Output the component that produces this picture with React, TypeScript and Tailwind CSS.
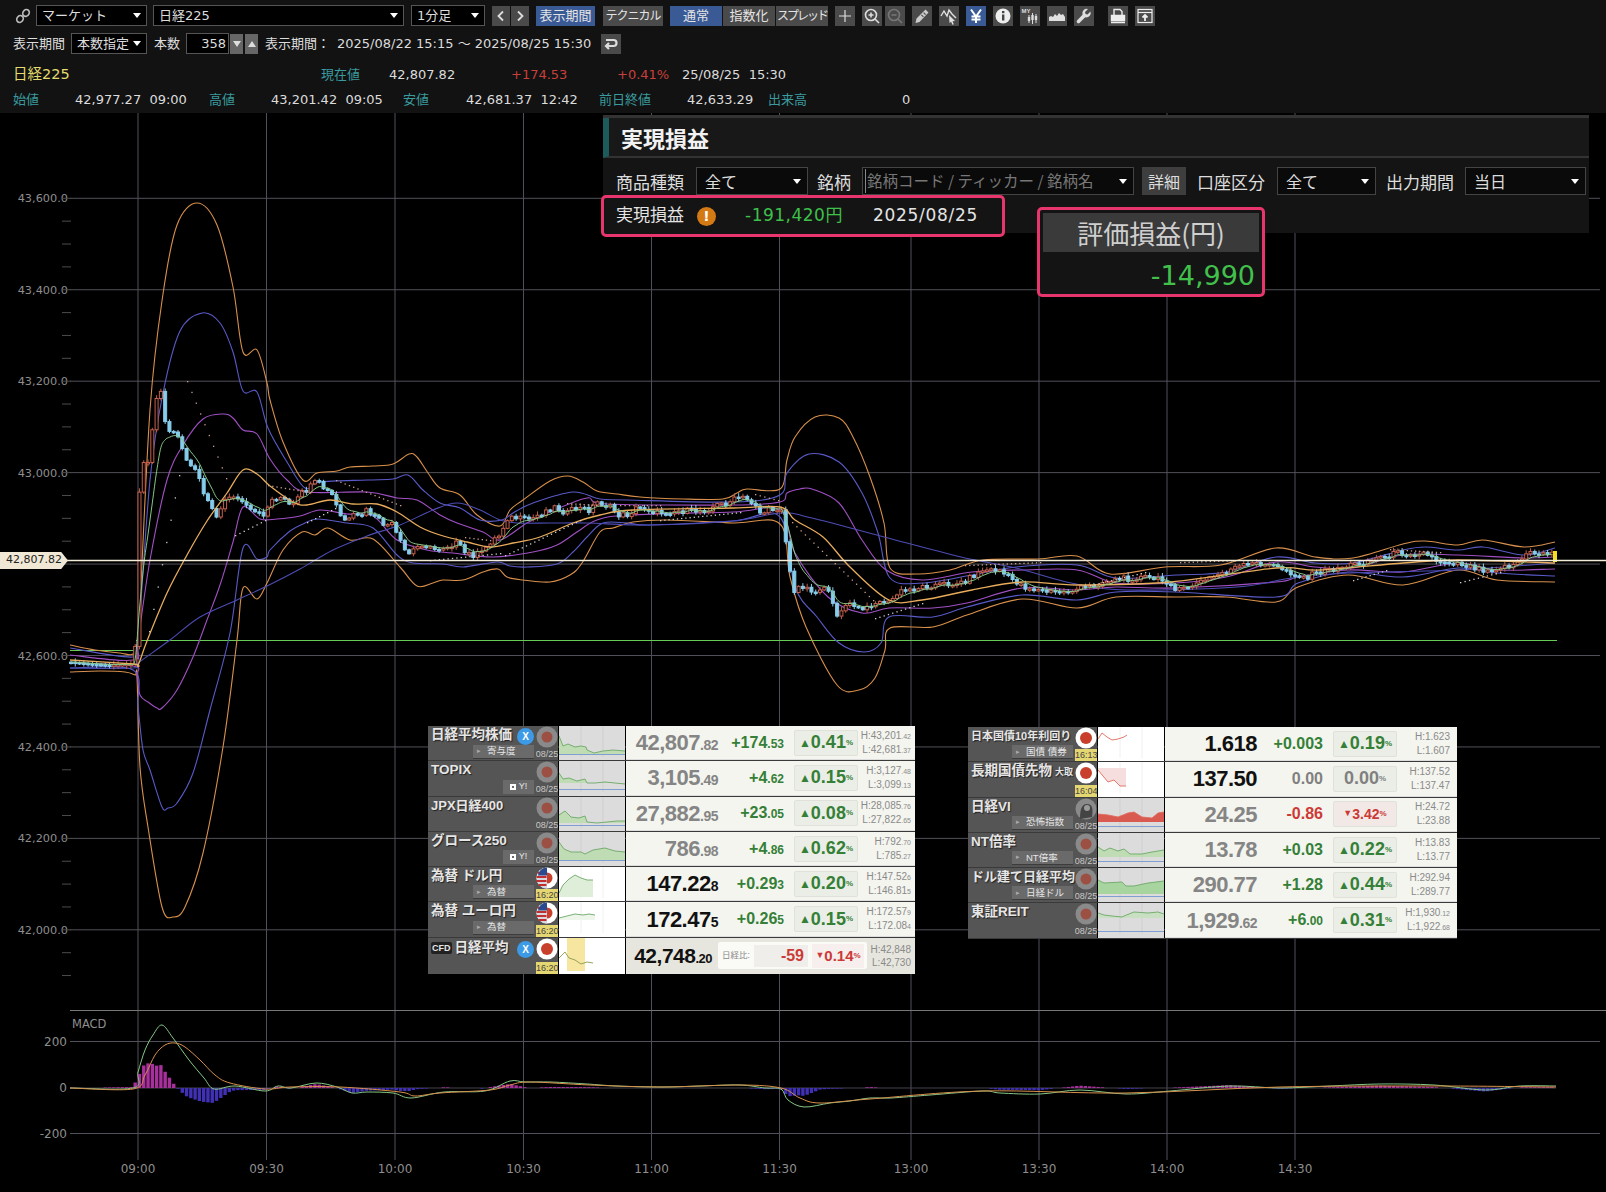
import React from "react";

type Pt = [number, number];

const XS = [138, 266.5, 395, 523.5, 651.5, 779.5, 911, 1039, 1167, 1295];
const TIMES = ["09:00", "09:30", "10:00", "10:30", "11:00", "11:30", "13:00", "13:30", "14:00", "14:30"];

const ORANGE_U: Pt[] = [[70,645],[95,650],[120,653],[133,654],[138,640],[150,410],[163,294],[177,225],[197,203],[217,225],[233,287],[243,352],[257,350],[267,383],[270,400],[283,442],[303,480],[317,473],[337,471],[350,467],[373,466],[393,464],[409,454],[417,457],[428,473],[440,488],[460,495],[477,515],[500,526],[510,510],[523,500],[550,481],[568,476],[583,482],[597,491],[617,494],[640,497],[683,499],[723,499],[737,493],[747,489],[780,489],[787,460],[795,437],[815,417],[839,418],[853,437],[870,477],[884,523],[890,568],[917,574],[950,570],[983,560],[1038,559],[1077,556],[1110,574],[1165,567],[1221,565],[1276,548],[1315,557],[1353,558],[1403,544],[1425,541],[1458,545],[1483,540],[1524,547],[1555,542]];
const ORANGE_L: Pt[] = [[70,672],[100,671],[125,672],[135,675],[137,677],[140,767],[148,827],[162,907],[173,917],[185,907],[203,853],[223,747],[237,640],[243,588],[257,599],[267,583],[283,550],[302,532],[315,535],[328,528],[350,540],[373,539],[400,567],[417,586],[433,583],[443,580],[463,580],[483,572],[498,569],[507,577],[523,580],[550,582],[570,575],[582,563],[600,532],[613,528],[633,522],[667,520],[733,523],[780,524],[790,577],[806,627],[837,685],[859,690],[875,678],[885,650],[890,628],[933,627],[967,615],[1022,599],[1077,608],[1116,597],[1176,597],[1226,597],[1276,602],[1298,587],[1348,575],[1403,585],[1458,570],[1497,580],[1555,582]];
const BLUE_U: Pt[] = [[70,648],[133,657],[138,640],[150,480],[163,393],[180,331],[202,313],[220,323],[233,352],[243,391],[257,392],[268,428],[287,462],[305,488],[320,482],[367,480],[393,479],[408,475],[423,490],[440,503],[460,508],[480,520],[502,520],[513,513],[533,503],[573,492],[600,499],[627,500],[733,502],[780,495],[787,473],[809,454],[839,462],[862,493],[878,533],[890,578],[922,583],[972,575],[1016,567],[1077,565],[1116,578],[1176,575],[1226,572],[1276,557],[1315,563],[1353,563],[1403,550],[1425,547],[1458,550],[1483,547],[1524,555],[1555,548]];
const BLUE_L: Pt[] = [[70,668],[133,670],[138,707],[143,750],[150,770],[162,807],[168,808],[177,803],[193,773],[210,710],[230,633],[243,548],[257,559],[267,557],[270,550],[290,531],[303,524],[317,519],[347,523],[373,528],[397,555],[413,563],[443,564],[463,567],[497,562],[510,566],[527,567],[557,564],[573,552],[587,537],[603,523],[627,523],[650,525],[733,521],[780,517],[795,587],[817,617],[839,643],[864,652],[881,643],[889,617],[933,617],[967,607],[1022,595],[1077,600],[1116,592],[1176,592],[1276,597],[1298,583],[1348,572],[1403,577],[1458,568],[1497,573],[1555,576]];
const PURPLE_U: Pt[] = [[70,655],[133,660],[138,640],[150,560],[167,480],[183,445],[203,419],[223,414],[233,418],[243,430],[257,434],[270,459],[287,480],[307,492],[367,492],[397,498],[417,500],[440,515],[457,523],[483,532],[500,540],[527,523],[550,512],[587,498],[607,504],[733,505],[780,502],[787,493],[800,489],[812,489],[839,503],[862,540],[886,570],[922,580],[972,572],[1022,570],[1077,570],[1116,583],[1176,583],[1226,577],[1276,562],[1315,567],[1353,568],[1403,555],[1458,555],[1524,558],[1555,557]];
const PURPLE_L: Pt[] = [[70,663],[133,666],[137,675],[140,695],[148,702],[157,708],[162,708],[177,690],[193,657],[207,620],[220,585],[233,542],[243,507],[260,519],[277,519],[300,516],[320,510],[347,514],[373,516],[397,540],[427,550],[453,553],[493,557],[533,552],[557,545],[577,532],[597,520],[630,515],[733,512],[780,510],[795,553],[828,597],[862,613],[889,608],[933,608],[967,603],[1022,588],[1077,590],[1116,587],[1176,588],[1276,582],[1298,577],[1348,570],[1403,572],[1458,563],[1497,570],[1555,569]];
const MA_MID: Pt[] = [[70,660],[133,664],[138,665],[147,641],[167,593],[187,555],[207,521],[227,493],[243,470],[257,474],[270,486],[293,502],[307,505],[330,500],[353,504],[377,504],[397,512],[420,527],[440,535],[467,542],[490,547],[513,543],[540,537],[573,523],[600,515],[633,510],[733,508],[780,507],[795,520],[823,537],[850,567],[889,600],[922,600],[972,590],[1022,582],[1077,585],[1171,582],[1276,568],[1320,570],[1403,563],[1458,560],[1555,563]];
const MA_LONG: Pt[] = [[70,668],[133,668],[138,663],[170,640],[200,617],[237,600],[267,586],[300,569],[333,550],[367,536],[400,525],[433,510],[457,503],[480,510],[500,520],[517,523],[550,523],[587,523],[650,525],[733,521],[781,513],[812,518],[884,537],[961,557],[1016,568],[1071,583],[1127,590],[1237,587],[1292,578],[1348,573],[1458,570],[1555,563]];
const CLOSE: Pt[] = [[70,662],[90,664],[110,665],[133,664],[136,640],[140,470],[145,460],[150,464],[154,405],[158,395],[162,390],[166,430],[171,432],[175,432],[180,440],[184,455],[188,463],[192,467],[196,470],[200,480],[204,495],[209,502],[213,510],[218,520],[222,504],[226,498],[230,497],[235,497],[240,500],[244,503],[248,510],[253,513],[258,513],[262,517],[266,510],[272,500],[278,497],[283,498],[288,505],[293,506],[297,500],[302,493],[307,490],[315,483],[320,484],[325,490],[332,495],[338,510],[342,520],[350,520],[355,515],[360,518],[365,510],[370,513],[378,520],[385,525],[392,525],[397,535],[403,548],[408,555],[413,550],[423,543],[432,550],[443,547],[457,543],[465,553],[473,555],[482,553],[490,542],[500,535],[507,518],[517,518],[525,520],[533,518],[547,510],[555,507],[567,513],[577,508],[590,510],[597,502],[610,507],[618,515],[627,515],[637,508],[645,508],[657,513],[673,511],[693,511],[705,510],[717,505],[727,503],[740,497],[747,500],[757,505],[760,513],[777,508],[783,508],[787,557],[790,570],[793,597],[798,587],[806,587],[815,593],[826,585],[831,600],[837,615],[848,603],[862,610],[878,602],[889,602],[900,592],[931,585],[961,583],[983,570],[1000,570],[1005,575],[1027,588],[1049,592],[1066,592],[1094,585],[1110,580],[1143,577],[1171,582],[1176,592],[1210,578],[1237,567],[1259,563],[1281,568],[1303,578],[1320,572],[1359,563],[1397,553],[1425,553],[1436,560],[1458,563],[1486,570],[1513,565],[1530,553],[1552,553]];
const MACD: Pt[] = [[70,1088],[133,1088],[138,1072],[145,1050],[153,1035],[162,1025],[173,1038],[189,1060],[204,1078],[214,1089],[235,1086],[265,1091],[278,1086],[291,1088],[316,1083],[337,1087],[352,1093],[367,1092],[393,1093],[411,1098],[444,1092],[485,1091],[510,1081],[525,1082],[551,1082],[587,1084],[617,1086],[663,1087],[700,1086],[740,1085],[765,1088],[781,1089],[788,1100],[804,1107],[830,1103],[850,1101],[870,1098],[891,1098],[930,1095],[983,1091],[1000,1093],[1040,1094],[1080,1090],[1126,1094],[1170,1091],[1230,1086],[1280,1088],[1330,1086],[1380,1084],[1434,1085],[1485,1090],[1520,1086],[1556,1086]];
const SIGNAL: Pt[] = [[70,1088],[133,1089],[145,1075],[155,1055],[165,1045],[175,1043],[185,1047],[200,1060],[215,1075],[230,1083],[265,1089],[290,1087],[340,1087],[400,1092],[415,1096],[440,1093],[490,1090],[510,1085],[530,1082],[590,1085],[660,1087],[740,1085],[781,1088],[800,1098],[820,1103],[870,1099],[983,1091],[1126,1093],[1280,1087],[1434,1086],[1556,1087]];

// sar segments: x0,y0,x1,y1,colour
const SAR: [number, number, number, number, string][] = [
  [149,631,179,475,"#cfcfcf"],[187,381,226,478,"#c9a090"],[235,535,265,520,"#cfcfcf"],[268,485,310,492,"#c9a090"],
  [307,522,335,508,"#cfcfcf"],[336,480,400,505,"#c9a090"],[430,560,500,553,"#cfcfcf"],[465,537,490,540,"#c9a090"],
  [505,555,580,520,"#cfcfcf"],[567,503,600,505,"#c9a090"],[620,505,660,505,"#c9a090"],[660,520,740,512,"#cfcfcf"],
  [755,494,778,500,"#c9a090"],[792,522,873,600,"#c9a090"],[875,618,922,603,"#cfcfcf"],[965,565,1040,562,"#c9a090"],
  [1090,585,1145,572,"#cfcfcf"],[1180,562,1235,560,"#c9a090"],[1353,580,1386,570,"#cfcfcf"],[1390,549,1440,552,"#c9a090"],
  [1460,582,1500,572,"#cfcfcf"],
];

function interp(pts: Pt[], x: number) {
  for (let i = 1; i < pts.length; i++) {
    if (x <= pts[i][0]) {
      const [x0, y0] = pts[i - 1];
      const [x1, y1] = pts[i];
      return y0 + ((y1 - y0) * (x - x0)) / (x1 - x0);
    }
  }
  return pts[pts.length - 1][1];
}

// catmull-rom through the read-off points so the bands don't look angular
function smooth(pts: Pt[]) {
  let d = `M${pts[0][0]} ${pts[0][1]}`;
  for (let i = 0; i < pts.length - 1; i++) {
    const p0 = pts[Math.max(i - 1, 0)];
    const p1 = pts[i];
    const p2 = pts[i + 1];
    const p3 = pts[Math.min(i + 2, pts.length - 1)];
    const cx1 = p1[0] + (p2[0] - p0[0]) / 6;
    const cy1 = p1[1] + (p2[1] - p0[1]) / 6;
    const cx2 = p2[0] - (p3[0] - p1[0]) / 6;
    const cy2 = p2[1] - (p3[1] - p1[1]) / 6;
    d += ` C${cx1} ${cy1} ${cx2} ${cy2} ${p2[0]} ${p2[1]}`;
  }
  return d;
}

const BARS: number[] = [];
for (let x = 71; x < 1553; x += 4.28) BARS.push(x);

function wobble(i: number) {
  const s = Math.sin(i * 12.9898) * 43758.5453;
  return s - Math.floor(s);
}

const CLOSES = BARS.map((x, i) => {
  const base = interp(CLOSE, x);
  if (x < 240) return base;
  return base + (wobble(i + 7) - 0.5) * (x < 800 || x > 900 ? 6 : 3);
});

const FAST: Pt[] = (() => {
  let e = CLOSES[0];
  return BARS.map((x, i) => {
    e += (CLOSES[i] - e) * 0.3;
    return [x, e] as Pt;
  });
})();

function Candles() {
  return (
    <g>
      {BARS.map((x, i) => {
        const c = CLOSES[i];
        const o = i === 0 ? c : CLOSES[i - 1];
        const up = c < o;
        const top = Math.min(o, c);
        const h = Math.max(Math.abs(o - c), 1.5);
        const wick = 1 + wobble(i) * 3;
        return (
          <g key={i}>
            <line x1={x} x2={x} y1={top - wick} y2={top + h + wick * 0.8} stroke={up ? "#b8604c" : "#8fd0ec"} strokeWidth="1" />
            <rect x={x - 1.5} y={top} width="3" height={h} fill={up ? "#000" : "#86cdec"} stroke={up ? "#c8604c" : "#86cdec"} strokeWidth="1" />
          </g>
        );
      })}
      <rect x="1553" y="551" width="4" height="11" fill="#f0e020" />
    </g>
  );
}

function Chart() {
  const ticks: number[] = [];
  for (let p = 0; p < 35; p++) ticks.push(198.3 + 22.86 * p);
  return (
    <svg viewBox="0 113 1606 1079" className="absolute inset-0 h-[1079px] w-[1606px] [font-family:'DejaVu_Sans',sans-serif]">
      {XS.map((x) => (
        <line key={x} x1={x} x2={x} y1="113" y2="1160" stroke="#50505c" />
      ))}
      {[43600, 43400, 43200, 43000, 42800, 42600, 42400, 42200, 42000].map((p) => {
        const y = 198.3 + (43600 - p) * 0.4572;
        return (
          <g key={p}>
            <line x1="70" x2="1600" y1={y} y2={y} stroke="#50505a" />
            {p !== 42800 && (
              <text x="68" y={y + 4} textAnchor="end" fontSize="11.3" fill="#8e8e8e">
                {p.toLocaleString("en-US")}.0
              </text>
            )}
          </g>
        );
      })}
      {ticks.filter((y) => y < 990).map((y, i) => (
        <line key={i} x1="62" x2="71" y1={y} y2={y} stroke="#4c4c4c" />
      ))}
      <line x1="70" x2="1606" y1="1010.5" y2="1010.5" stroke="#777" />
      <line x1="70" x2="1600" y1="1041.5" y2="1041.5" stroke="#50505a" />
      <line x1="70" x2="1600" y1="1133.5" y2="1133.5" stroke="#50505a" />
      <line x1="70" x2="1556" y1="1088" y2="1088" stroke="#44444c" />

      <line x1="70" x2="135" y1="650.5" y2="650.5" stroke="#66cc55" />
      <line x1="136" x2="1557" y1="640.5" y2="640.5" stroke="#66cc55" />
      <path d={smooth(ORANGE_U)} fill="none" stroke="#d8904c" strokeWidth="1.1" />
      <path d={smooth(ORANGE_L)} fill="none" stroke="#d8904c" strokeWidth="1.1" />
      <path d={smooth(BLUE_U)} fill="none" stroke="#5a5ac8" strokeWidth="1.1" />
      <path d={smooth(BLUE_L)} fill="none" stroke="#5a5ac8" strokeWidth="1.1" />
      <path d={smooth(PURPLE_U)} fill="none" stroke="#a050c4" strokeWidth="1.1" />
      <path d={smooth(PURPLE_L)} fill="none" stroke="#a050c4" strokeWidth="1.1" />
      <path d={smooth(MA_LONG)} fill="none" stroke="#4c4cb4" strokeWidth="1.1" />
      <Candles />
      <path d={smooth(MA_MID)} fill="none" stroke="#e8ac5c" strokeWidth="1.3" />
      <path d={smooth(FAST)} fill="none" stroke="#86c886" strokeWidth="1" />
      {SAR.map(([x0, y0, x1, y1, c], i) => {
        const n = Math.round((x1 - x0) / 4.28);
        return Array.from({ length: n + 1 }, (_, k) => (
          <rect key={i + "-" + k} x={x0 + (x1 - x0) * (k / n)} y={y0 + (y1 - y0) * (k / n)} width="1.3" height="1.3" fill={c} />
        ));
      })}
      <line x1="0" x2="1606" y1="560.5" y2="560.5" stroke="#f2ecd8" strokeWidth="1.4" />

      <text x="72" y="1028" fontSize="11.5" fill="#8e8e8e">MACD</text>
      <text x="67" y="1045.5" textAnchor="end" fontSize="12" fill="#8e8e8e">200</text>
      <text x="67" y="1092" textAnchor="end" fontSize="12" fill="#8e8e8e">0</text>
      <text x="67" y="1137.5" textAnchor="end" fontSize="12" fill="#8e8e8e">-200</text>
      {BARS.map((x, i) => {
        const d = interp(SIGNAL, x) - interp(MACD, x);
        if (Math.abs(d) < 0.5) return null;
        return (
          <rect key={i} x={x - 1.7} y={d > 0 ? 1088 - d : 1088} width="3.4" height={Math.abs(d)} fill={d > 0 ? "#a8309c" : "#4030b4"} />
        );
      })}
      <path d={smooth(MACD)} fill="none" stroke="#86c886" strokeWidth="1" />
      <path d={smooth(SIGNAL)} fill="none" stroke="#d8904c" strokeWidth="1" />
      {XS.map((x, i) => (
        <text key={x} x={x} y="1173" textAnchor="middle" fontSize="12" fill="#8e8e8e">
          {TIMES[i]}
        </text>
      ))}
    </svg>
  );
}

function Caret() {
  return <span className="ml-auto h-0 w-0 border-x-[4px] border-t-[5px] border-x-transparent border-t-white" />;
}

function DarkSelect({ label, className }: { label: string; className: string }) {
  return (
    <div className={"flex h-[21px] items-center border border-[#555] bg-black pl-[5px] pr-[5px] text-[13px] text-[#ddd] " + className}>
      <span>{label}</span>
      <Caret />
    </div>
  );
}

function Btn({ active, children, className = "w-[20px]" }: { active?: boolean; children: React.ReactNode; className?: string }) {
  return (
    <div className={"flex h-[20px] shrink-0 items-center justify-center overflow-hidden whitespace-nowrap text-[13px] text-[#e4e4e4] " + (active ? "bg-[#3a5a96] " : "bg-[#4a4a4a] ") + className}>
      {children}
    </div>
  );
}

const I = { width: 18, height: 18, viewBox: "0 0 18 18", fill: "none" };

function Toolbar() {
  return (
    <div className="ml-[7px] flex items-center gap-[7px]">
      <Btn>
        <svg {...I} stroke="#ddd" strokeWidth="1.2"><path d="M9 3v12M3 9h12" /></svg>
      </Btn>
      <div className="flex gap-[3px]">
        <Btn>
          <svg {...I} stroke="#ddd" strokeWidth="1.6"><circle cx="8" cy="8" r="5.5" /><path d="M12 12l4 4M5.5 8h5M8 5.5v5" /></svg>
        </Btn>
        <Btn>
          <svg {...I} stroke="#777" strokeWidth="1.6"><circle cx="8" cy="8" r="5.5" /><path d="M12 12l4 4M5.5 8h5" /></svg>
        </Btn>
      </div>
      <Btn>
        <svg {...I} fill="#ccc"><path d="M12.5 2.5l3 3-9 9.5-4 1 1-4.5zM11 5.2l2 2-.8.8-2-2zM8.8 7.5l2 2-.8.8-2-2z" fillRule="evenodd" /></svg>
      </Btn>
      <Btn>
        <svg {...I} stroke="#e0e0e0" strokeWidth="1.4"><path d="M1 9l3-5 3 5 2-6 3 4 4 4" /><path d="M9 8l6 6-2.5.2 1.3 3-1.4.5-1.3-3L9.5 16z" fill="#e0e0e0" stroke="none" /></svg>
      </Btn>
      <Btn active>
        <svg {...I} stroke="#fff" strokeWidth="2"><path d="M4 2.5l5 7 5-7M9 9.5v6.5M4.5 9.5h9M4.5 12.5h9" /></svg>
      </Btn>
      <Btn>
        <svg {...I}><circle cx="9" cy="9" r="7.5" fill="#eee" /><rect x="8" y="7.5" width="2.4" height="6" fill="#444" /><rect x="8" y="4" width="2.4" height="2.2" fill="#444" /></svg>
      </Btn>
      <Btn>
        <svg {...I} viewBox="0 0 18 18">
          <text x="0.5" y="6" fontSize="6" fontWeight="700" fill="#ddd" className="[font-family:'Liberation_Sans',sans-serif]">MY</text>
          <path d="M8 8v8M11.5 6v11M15 7v9" stroke="#ddd" /><path d="M6.8 10h2.4v4H6.8zM10.3 8h2.4v5h-2.4zM13.8 9h2.4v4h-2.4z" fill="#ddd" />
        </svg>
      </Btn>
      <Btn>
        <svg {...I} fill="#e0e0e0"><path d="M1 14V10l2-1 2 1 2-3 2 2 2-3 2 2 2-1 2 3v4z" /></svg>
      </Btn>
      <Btn>
        <svg {...I} fill="#ddd"><path d="M15.5 4.5l-3 3-2-.5-.5-2 3-3a4.5 4.5 0 0 0-5.5 5.8L2 13.5a1.8 1.8 0 0 0 2.5 2.500l5.700-5.700a4.500 4.500 0 0 0 5.300-5.800z" /></svg>
      </Btn>
      <div className="ml-[7px]">
        <Btn>
          <svg {...I} stroke="#eee" strokeWidth="1.4"><path d="M5 8V2.500h6l2 2V8" /><path d="M2.500 8.500h13v5h-13zM2 15.500h14" fill="#eee" /></svg>
        </Btn>
      </div>
      <Btn>
        <svg {...I} stroke="#eee" strokeWidth="1.2"><rect x="2" y="2.500" width="14" height="13" /><path d="M2 5.500h14" /><path d="M9 14V8.500M6.500 10.500L9 8l2.500 2.500" strokeWidth="1.800" /></svg>
      </Btn>
    </div>
  );
}

function Header() {
  const lab = "text-[#3a9a9e]";
  return (
    <div className="h-[113px] bg-[#121212] text-[13px] text-[#dcdcdc] [font-family:'DejaVu_Sans','Noto_Sans_CJK_JP',sans-serif]">
      <div className="flex items-center pt-[5px]">
        <div className="ml-[15px] mr-[5px] w-[16px]">
          <svg width="16" height="16" viewBox="0 0 16 16" fill="none" stroke="#bbb" strokeWidth="1.700">
            <ellipse cx="5" cy="11" rx="3" ry="3.600" transform="rotate(40 5 11)" />
            <ellipse cx="11" cy="5" rx="3" ry="3.600" transform="rotate(40 11 5)" />
          </svg>
        </div>
        <DarkSelect label="マーケット" className="w-[111px]" />
        <DarkSelect label="日経225" className="ml-[6px] w-[251px]" />
        <DarkSelect label="1分足" className="ml-[7px] w-[74px]" />
        <div className="ml-[7px] flex gap-[1px]">
          <Btn className="w-[18px]"><svg width="10" height="12" viewBox="0 0 10 12" fill="none" stroke="#ddd" strokeWidth="1.800"><path d="M7 1.500L2.500 6 7 10.500" /></svg></Btn>
          <Btn className="w-[18px]"><svg width="10" height="12" viewBox="0 0 10 12" fill="none" stroke="#ddd" strokeWidth="1.800"><path d="M3 1.500L7.500 6 3 10.500" /></svg></Btn>
        </div>
        <Btn active className="ml-[7px] w-[59px]">表示期間</Btn>
        <Btn className="ml-[8px] w-[60px]"><span className="text-[12px] tracking-[-1px]">テクニカル</span></Btn>
        <div className="ml-[7px] flex gap-[1px]">
          <Btn active className="w-[52px]">通常</Btn>
          <Btn className="w-[52px]">指数化</Btn>
          <Btn className="w-[52px]"><span className="text-[12px] tracking-[-2px]">スプレッド</span></Btn>
        </div>
        <Toolbar />
      </div>
      <div className="mt-[7px] flex items-center text-[13px]">
        <span className="ml-[13px] w-[58px]">表示期間</span>
        <DarkSelect label="本数指定" className="w-[76px]" />
        <span className="ml-[7px] w-[32px]">本数</span>
        <div className="flex h-[21px] w-[43px] items-center justify-end border border-[#555] bg-black pr-[2px] text-[13px]">358</div>
        <div className="ml-[1px] flex h-[20px] w-[13px] items-center justify-center bg-[#666]"><span className="h-0 w-0 border-x-[4px] border-t-[6px] border-x-transparent border-t-[#ddd]" /></div>
        <div className="ml-[2px] flex h-[20px] w-[13px] items-center justify-center bg-[#666]"><span className="h-0 w-0 border-x-[4px] border-b-[6px] border-x-transparent border-b-[#ddd]" /></div>
        <span className="ml-[7px] w-[72px]">表示期間：</span>
        <span className="w-[264px] whitespace-nowrap text-[13px]">2025/08/22 15:15 ～ 2025/08/25 15:30</span>
        <Btn className="w-[20px]">
          <svg width="16" height="14" viewBox="0 0 16 14" fill="none" stroke="#ddd" strokeWidth="2.200"><path d="M3 3h7.500a3 3 0 0 1 0 6H3M6 6L3 9l3 3" /></svg>
        </Btn>
      </div>
      <div className="mt-[12px] flex h-[18px] items-center whitespace-nowrap pl-[13px]">
        <span className="w-[308px] text-[14.500px] text-[#e4dc6c]">日経225</span>
        <span className={"w-[68px] text-[13px] " + lab}>現在値</span>
        <span className="w-[122px]">42,807.82</span>
        <span className="w-[106px] text-[#c8403c]">+174.53</span>
        <span className="w-[65px] text-[#c8403c]">+0.41%</span>
        <span>25/08/25&nbsp;&nbsp;15:30</span>
      </div>
      <div className="mt-[7px] flex h-[18px] items-center whitespace-nowrap pl-[13px]">
        <span className={"w-[62px] text-[13px] " + lab}>始値</span>
        <span className="w-[134px]">42,977.27&nbsp;&nbsp;09:00</span>
        <span className={"w-[62px] text-[13px] " + lab}>高値</span>
        <span className="w-[132px]">43,201.42&nbsp;&nbsp;09:05</span>
        <span className={"w-[63px] text-[13px] " + lab}>安値</span>
        <span className="w-[133px]">42,681.37&nbsp;&nbsp;12:42</span>
        <span className={"w-[88px] text-[13px] " + lab}>前日終値</span>
        <span className="w-[81px]">42,633.29</span>
        <span className={"w-[134px] text-[13px] " + lab}>出来高</span>
        <span>0</span>
      </div>
    </div>
  );
}

function PanelSelect({ label, className }: { label: string; className: string }) {
  return (
    <div className={"flex h-[28px] items-center border border-[#444] bg-[#0a0a0a] pl-[8px] pr-[6px] text-[16px] text-[#ddd] " + className}>
      <span>{label}</span>
      <Caret />
    </div>
  );
}

function ProfitPanel() {
  return (
    <>
      <div className="absolute left-[603px] top-[2px] h-[118px] w-[986px] border-t-[3px] border-[#333] bg-[#141414] [font-family:'Noto_Sans_CJK_JP',sans-serif]">
        <div className="flex h-[40px] items-center border-b-[2px] border-l-[6px] border-b-[#333] border-l-[#1d5a5c] bg-[#181818] pl-[12px] pt-[1px] text-[22px] font-bold text-[#f2f2f2]">実現損益</div>
        <div className="mt-[9px] flex items-center text-[17px] text-[#ddd]">
          <span className="ml-[13px] w-[80px] whitespace-nowrap pt-[2px]">商品種類</span>
          <PanelSelect label="全て" className="w-[112px]" />
          <span className="ml-[9px] w-[45px] pt-[2px]">銘柄</span>
          <div className="flex h-[28px] w-[272px] items-center border border-[#444] bg-[#0a0a0a] pl-[2px] pr-[6px] text-[#777]">
            <span className="border-l border-[#888] pl-[1px] text-[15.500px]">銘柄コード / ティッカー / 銘柄名</span>
            <Caret />
          </div>
          <div className="ml-[8px] flex h-[28px] w-[44px] items-center justify-center bg-[#3e3e3e] text-[16px]">詳細</div>
          <span className="ml-[11px] w-[80px] whitespace-nowrap pt-[2px]">口座区分</span>
          <PanelSelect label="全て" className="w-[99px]" />
          <span className="ml-[10px] w-[79px] whitespace-nowrap pt-[2px]">出力期間</span>
          <PanelSelect label="当日" className="w-[121px]" />
        </div>
      </div>
      <div className="absolute left-[601px] top-[82px] flex h-[42px] w-[404px] items-center rounded-[5px] border-[3px] border-[#e8356d] bg-[#141414] text-[17px] text-[#e4e4e4] [font-family:'DejaVu_Sans','Noto_Sans_CJK_JP',sans-serif]">
        <span className="ml-[12px] w-[81px] whitespace-nowrap">実現損益</span>
        <span className="flex h-[19px] w-[19px] items-center justify-center rounded-full bg-[#d47a14] text-[14px] font-bold leading-none text-white">!</span>
        <span className="ml-[29px] w-[128px] whitespace-nowrap tracking-[0.5px] text-[#3fc04a]">-191,420円</span>
        <span className="whitespace-nowrap tracking-[0.7px]">2025/08/25</span>
      </div>
      <div className="absolute left-[1037px] top-[94px] h-[90px] w-[228px] rounded-[5px] border-[3px] border-[#e8356d] bg-[#141414] p-[3px] [font-family:'DejaVu_Sans','Noto_Sans_CJK_JP',sans-serif]">
        <div className="flex h-[39px] items-center justify-center bg-[#3a3a3a] text-[26px] text-[#cfcfcf] [font-family:'Noto_Sans_CJK_JP',sans-serif]">評価損益(円)</div>
        <div className="mt-[6px] pr-[4px] text-right text-[27px] leading-[36px] text-[#42c04c]">-14,990</div>
      </div>
    </>
  );
}

type RowData = {
  name: string;
  small?: string;
  btn?: string;
  yahoo?: boolean;
  x?: boolean;
  mode: "closed" | "live" | "fx" | "vi";
  time?: string;
  spark: string;
  area?: string;
  base?: number;
  bg: string;
  v: [string, string];
  vLive?: boolean;
  c: [string, string];
  p: string;
  dir: "up" | "down" | "flat";
  h: [string, string];
  l: [string, string];
};

const GRAY = "bg-[#dcdcdc]";
const WHITE = "bg-white";

const ROWS_A: RowData[] = [
  { name: "日経平均株価", btn: "寄与度", x: true, mode: "closed", bg: GRAY, spark: "0,10 4,20 9,18 16,21 22,20 27,21 28,24 35,27 44,25 54,24 66,25", area: "#bfdcb4", base: 28, v: ["42,807", ".82"], c: ["+174", ".53"], p: "0.41", dir: "up", h: ["H:43,201", ".42"], l: ["L:42,681", ".37"] },
  { name: "TOPIX", yahoo: true, mode: "closed", bg: GRAY, spark: "0,12 4,18 10,17 18,20 26,18 28,22 36,22 46,21 56,22 66,23", area: "#bfdcb4", base: 22, v: ["3,105", ".49"], c: ["+4", ".62"], p: "0.15", dir: "up", h: ["H:3,127", ".48"], l: ["L:3,099", ".13"] },
  { name: "JPX日経400", mode: "closed", bg: GRAY, spark: "0,18 6,14 12,20 20,21 26,19 28,25 38,26 48,25 58,24 66,24", area: "#bfdcb4", base: 26, v: ["27,882", ".95"], c: ["+23", ".05"], p: "0.08", dir: "up", h: ["H:28,085", ".76"], l: ["L:27,822", ".65"] },
  { name: "グロース250", yahoo: true, mode: "closed", bg: GRAY, spark: "0,10 5,17 12,20 22,20 26,22 34,18 46,16 56,19 66,20", area: "#bfdcb4", base: 29, v: ["786", ".98"], c: ["+4", ".86"], p: "0.62", dir: "up", h: ["H:792", ".70"], l: ["L:785", ".27"] },
  { name: "為替 ドル円", btn: "為替", mode: "fx", time: "16:20", bg: WHITE, spark: "0,26 4,18 10,12 16,8 22,11 28,13 34,13", area: "#dfeed9", base: 30, v: ["147.22", "8"], vLive: true, c: ["+0.29", "3"], p: "0.20", dir: "up", h: ["H:147.52", "6"], l: ["L:146.81", "5"] },
  { name: "為替 ユーロ円", btn: "為替", mode: "fx", time: "16:20", bg: WHITE, spark: "0,16 8,14 16,12 24,13 30,12 36,13", area: "#eef5ea", base: 18, v: ["172.47", "5"], vLive: true, c: ["+0.26", "5"], p: "0.15", dir: "up", h: ["H:172.57", "9"], l: ["L:172.08", "4"] },
];

const ROWS_B: RowData[] = [
  { name: "日本国債10年利回り", small: "1", btn: "国債 債券", mode: "live", time: "16:13", bg: WHITE, spark: "0,12 4,6 9,10 14,13 20,12 26,10 29,8", v: ["1.618", ""], vLive: true, c: ["+0.003", ""], p: "0.19", dir: "up", h: ["H:1.623", ""], l: ["L:1.607", ""] },
  { name: "長期国債先物", small: "大取", mode: "live", time: "16:04", bg: WHITE, spark: "0,8 5,14 10,20 16,18 22,24 28,24", area: "#f7dede", base: 6, v: ["137.50", ""], vLive: true, c: ["0.00", ""], p: "0.00", dir: "flat", h: ["H:137.52", ""], l: ["L:137.47", ""] },
  { name: "日経VI", btn: "恐怖指数", mode: "vi", bg: GRAY, spark: "0,16 10,17 20,19 30,15 36,14 44,19 54,20 60,15 66,14", area: "#d85a50", base: 24, v: ["24.25", ""], c: ["-0.86", ""], p: "3.42", dir: "down", h: ["H:24.72", ""], l: ["L:23.88", ""] },
  { name: "NT倍率", btn: "NT倍率", mode: "closed", bg: GRAY, spark: "0,14 6,18 12,15 20,18 26,16 32,21 44,21 54,19 66,17", area: "#bfdcb4", base: 24, v: ["13.78", ""], c: ["+0.03", ""], p: "0.22", dir: "up", h: ["H:13.83", ""], l: ["L:13.77", ""] },
  { name: "ドル建て日経平均", btn: "日経ドル", mode: "closed", bg: GRAY, spark: "0,12 6,15 24,14 28,18 36,18 50,15 66,13", area: "#a8d4a0", base: 26, v: ["290.77", ""], c: ["+1.28", ""], p: "0.44", dir: "up", h: ["H:292.94", ""], l: ["L:289.77", ""] },
  { name: "東証REIT", mode: "closed", bg: GRAY, spark: "0,10 6,12 14,13 24,14 26,13 36,9 50,10 60,9 66,11", area: "#c9dfc2", base: 15, v: ["1,929", ".62"], c: ["+6", ".00"], p: "0.31", dir: "up", h: ["H:1,930", ".12"], l: ["L:1,922", ".68"] },
];

function StatusIcon({ mode, time }: { mode: RowData["mode"]; time?: string }) {
  return (
    <div className="flex h-full w-[22px] shrink-0 flex-col items-center justify-between overflow-hidden bg-[#555]">
      <svg width="22" height="22" viewBox="0 0 22 22" className="shrink-0">
        {mode === "closed" && (<><circle cx="11" cy="11" r="10.500" fill="#8a8a8a" /><circle cx="11" cy="11" r="5.500" fill="#9c5044" /></>)}
        {mode === "live" && (<><circle cx="11" cy="11" r="10.500" fill="#fff" /><circle cx="11" cy="11" r="6" fill="#c8402c" /></>)}
        {mode === "fx" && (
          <>
            <circle cx="11" cy="11" r="10.500" fill="#fff" />
            <circle cx="11" cy="11" r="5.500" fill="#c8402c" />
            <path d="M11 .5a10.500 10.500 0 0 0 0 21z" fill="#d8d8e0" />
            <path d="M10.500 6h-9M10.500 10h-10M10.500 14h-10M10.500 18h-8" stroke="#c03030" strokeWidth="2" />
            <path d="M11 .5a9 9 0 0 0-9 8h9z" fill="#2c4a90" />
          </>
        )}
        {mode === "vi" && (
          <>
            <circle cx="11" cy="11" r="10.500" fill="#8a8a8a" />
            <path d="M5 21c0-8 1-15 7-15s6 6 5 13z" fill="#444" />
            <circle cx="12" cy="10" r="3" fill="#9a9a9a" />
          </>
        )}
      </svg>
      {time ? (
        <span className="h-[12px] w-full whitespace-nowrap bg-[#e4d670] text-center text-[9px] leading-[12px] text-[#444]">{time}</span>
      ) : (
        <span className="whitespace-nowrap text-[9px] leading-[13px] text-[#c8c8c8]">08/25</span>
      )}
    </div>
  );
}

function Spark({ r }: { r: RowData }) {
  return (
    <div className={"ml-[1px] h-full w-[66px] shrink-0 " + r.bg}>
      <svg width="66" height="34" viewBox="0 0 66 34">
        {[22, 44].map((x) => (
          <line key={x} x1={x} x2={x} y1="0" y2="31" stroke={r.bg === WHITE ? "#f0f0f0" : "#cfcfcf"} />
        ))}
        {r.area && r.base !== undefined && (
          <polygon
            points={`${r.spark.split(" ")[0].split(",")[0]},${r.base} ${r.spark} ${r.spark.split(" ").slice(-1)[0].split(",")[0]},${r.base}`}
            fill={r.area}
          />
        )}
        {r.bg === GRAY && <line x1="0" x2="66" y1="28.500" y2="28.500" stroke="#7f9fd0" />}
        <polyline points={r.spark} fill="none" stroke={r.dir === "down" || r.name === "日本国債10年利回り" || r.name === "長期国債先物" ? "#e06a5c" : "#6ca868"} strokeWidth="0.900" />
      </svg>
    </div>
  );
}

function NameCell({ r, wide }: { r: RowData; wide?: boolean }) {
  return (
    <div className={"flex h-full shrink-0 flex-col bg-[#555] pl-[3px] pr-[1px] " + (wide ? "w-[107px]" : "w-[108px]")}>
      <div className="flex items-start justify-between">
        <span
          className={
            "whitespace-nowrap font-bold leading-[18px] text-[#e6e6e6] [text-shadow:1px_1px_1px_#222] " +
            (r.small === "1" ? "text-[11px]" : r.name.length > 7 ? "text-[13px]" : "text-[13.500px]")
          }
        >
          {r.name}
          {r.small && r.small !== "1" && <span className="ml-[3px] text-[9px]">{r.small}</span>}
        </span>
        {r.x && (
          <span className="mr-[1px] mt-[2px] flex h-[17px] w-[17px] shrink-0 items-center justify-center rounded-full bg-[#3c9ae6] text-[10px] font-bold text-white">X</span>
        )}
      </div>
      {r.btn && (
        <div className="mb-[2px] mr-[1px] mt-auto flex h-[14px] w-[61px] items-center self-end border-b border-[#3c3c3c] bg-[#6a6a6a] pl-[4px] text-[9.500px] text-[#e6e6e6]">
          <span className="mr-[6px] text-[7px] text-[#aaa]">▸</span>
          <span className="whitespace-nowrap">{r.btn}</span>
        </div>
      )}
      {r.yahoo && (
        <div className="mb-[2px] mr-[1px] mt-auto flex h-[14px] w-[31px] items-center justify-center gap-[3px] self-end bg-[#6a6a6a] text-[9px] text-[#e6e6e6]">
          <span className="h-[6px] w-[6px] border-2 border-white" />
          Y!
        </div>
      )}
    </div>
  );
}

function PctBox({ r }: { r: RowData }) {
  const c = r.dir === "up" ? "text-[#357f37]" : r.dir === "down" ? "text-[#cc3a36]" : "text-[#808080]";
  const bg = r.dir === "down" ? "bg-[#f2e8e6]" : "bg-[#ebeee6]";
  return (
    <div className={"ml-[10px] flex h-[26px] w-[64px] items-center justify-center rounded-[2px] border border-[#e0e2da] font-bold " + bg + " " + c}>
      {r.dir === "up" && <span className="text-[12px]">▲</span>}
      {r.dir === "down" && <span className="text-[9px]">▼</span>}
      <span className={r.dir === "down" ? "text-[14px]" : "text-[18px]"}>{r.p}</span>
      <span className="text-[8px]">%</span>
    </div>
  );
}

function Row({ r, wide }: { r: RowData; wide?: boolean }) {
  const changeColor = r.dir === "up" ? "text-[#357f37]" : r.dir === "down" ? "text-[#cc3a36]" : "text-[#808080]";
  return (
    <div className="flex h-[35.300px] border-b border-[#3a3a3a]">
      <NameCell r={r} wide={wide} />
      <StatusIcon mode={r.mode} time={r.time} />
      <Spark r={r} />
      <div className={"ml-[1px] flex h-full flex-1 items-center border-b border-[#ddd] bg-[#f4f5ef] " + (wide ? "pr-[7px]" : "pr-[4px]")}>
        <div className={"w-[92px] whitespace-nowrap text-right font-bold tracking-[-0.500px] " + (r.vLive ? "text-[#111]" : "text-[#858585]")}>
          <span className="text-[22px]">{r.v[0]}</span>
          <span className="text-[14px]">{r.v[1]}</span>
        </div>
        <div className={"w-[66px] whitespace-nowrap text-right font-bold " + changeColor}>
          <span className="text-[16px]">{r.c[0]}</span>
          <span className="text-[12px]">{r.c[1]}</span>
        </div>
        <PctBox r={r} />
        <div className="flex-1 whitespace-nowrap text-right text-[10px] leading-[13px] text-[#8a8a8a]">
          <div>{r.h[0]}<span className="text-[7px]">{r.h[1]}</span></div>
          <div>{r.l[0]}<span className="text-[7px]">{r.l[1]}</span></div>
        </div>
      </div>
    </div>
  );
}

function CfdRow() {
  return (
    <div className="flex h-[36px]">
      <div className="flex h-full w-[108px] shrink-0 items-start justify-between bg-[#555] pl-[3px] pr-[1px] pt-[1px]">
        <span className="flex items-center gap-[3px] font-bold text-[#e6e6e6] [text-shadow:1px_1px_1px_#222]">
          <span className="rounded-[2px] bg-[#222] px-[1px] text-[9px] leading-[12px]">CFD</span>
          <span className="text-[13.500px] leading-[18px]">日経平均</span>
        </span>
        <span className="mr-[1px] mt-[2px] flex h-[17px] w-[17px] items-center justify-center rounded-full bg-[#3c9ae6] text-[10px] font-bold text-white">X</span>
      </div>
      <StatusIcon mode="live" time="16:20" />
      <div className="relative ml-[1px] h-full w-[66px] shrink-0 bg-white">
        <div className="absolute bottom-[3px] left-[8px] top-0 w-[18px] bg-[#f6e6a0]" />
        <svg className="absolute inset-0" width="66" height="34" viewBox="0 0 66 34">
          <polyline points="0,20 6,14 10,20 16,22 22,26 28,24 34,25" fill="none" stroke="#8a9a50" strokeWidth="0.900" />
        </svg>
      </div>
      <div className="ml-[1px] flex h-full flex-1 items-center bg-[#e6e6de] pr-[4px]">
        <div className="w-[86px] whitespace-nowrap text-right font-bold tracking-[-0.500px] text-[#111]">
          <span className="text-[21px]">42,748</span>
          <span className="text-[13px]">.20</span>
        </div>
        <div className="ml-[6px] flex h-[27px] w-[149px] items-center rounded-[2px] bg-[#fafaf6] pl-[4px] pr-[3px]">
          <span className="w-[32px] text-[8.500px] text-[#888]">日経比:</span>
          <span className="flex h-[22px] w-[54px] items-center justify-end bg-[#efeeea] pr-[4px] text-[16px] font-bold text-[#cc3a36]">-59</span>
          <span className="ml-[4px] flex h-[24px] flex-1 items-center justify-center bg-[#f6efee] font-bold text-[#cc3a36]">
            <span className="text-[9px]">▼</span>
            <span className="text-[15px]">0.14</span>
            <span className="text-[8px]">%</span>
          </span>
        </div>
        <div className="flex-1 whitespace-nowrap text-right text-[10px] leading-[13px] text-[#8a8a8a]">
          <div>H:42,848</div>
          <div>L:42,730</div>
        </div>
      </div>
    </div>
  );
}

function QuoteTables() {
  return (
    <>
      <div className="absolute left-[428px] top-[613px] w-[487px] [font-family:'Liberation_Sans','Noto_Sans_CJK_JP',sans-serif]">
        {ROWS_A.map((r) => (
          <Row key={r.name} r={r} />
        ))}
        <CfdRow />
      </div>
      <div className="absolute left-[968px] top-[614px] w-[489px] [font-family:'Liberation_Sans','Noto_Sans_CJK_JP',sans-serif]">
        {ROWS_B.map((r) => (
          <Row key={r.name} r={r} wide />
        ))}
      </div>
    </>
  );
}

export default function App() {
  return (
    <div className="h-[1192px] w-[1606px] overflow-hidden bg-black">
      <Header />
      <div className="relative h-[1079px] w-[1606px]">
        <Chart />
        <div className="absolute left-0 top-[439px] flex h-[17px] w-[68px] items-center justify-center bg-[#f0e8d4] text-[11px] text-[#222] [clip-path:polygon(0_0,90%_0,100%_50%,90%_100%,0_100%)] [font-family:'DejaVu_Sans',sans-serif]">
          42,807.82
        </div>
        <ProfitPanel />
        <QuoteTables />
      </div>
    </div>
  );
}
